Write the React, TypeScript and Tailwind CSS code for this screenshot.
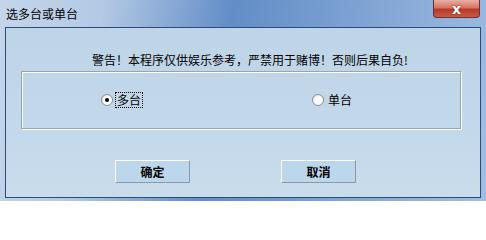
import React from "react";

const font = { fontFamily: '"SimSun","Noto Sans CJK SC","Liberation Sans",sans-serif' };

function Radio({ checked, label, focused }: { checked?: boolean; label: string; focused?: boolean }) {
  return (
    <div className="flex items-center">
      <div className="w-[12px] h-[12px] rounded-full border border-[#8a8f96] bg-[radial-gradient(circle_at_60%_60%,#ffffff_40%,#d6d9de_100%)] flex items-center justify-center">
        {checked && <div className="w-[4px] h-[4px] rounded-full bg-black" />}
      </div>
      <span
        className={
          "ml-[3px] text-[12px] leading-[14px] text-black px-[1px] " +
          (focused ? "outline outline-1 outline-dotted outline-black" : "")
        }
      >
        {label}
      </span>
    </div>
  );
}

function Btn({ label }: { label: string }) {
  return (
    <div className="w-[75px] h-[23px] flex items-center justify-center border border-t-white border-l-white border-r-[#8a98a8] border-b-[#8a98a8] bg-[#bcd6ec] text-[12px] font-bold text-black">
      {label}
    </div>
  );
}

export default function App() {
  return (
    <div
      style={font}
      className="w-[486px] h-[201px] overflow-hidden flex flex-col bg-[linear-gradient(100deg,#c5d6ea_0%,#b3c9e4_20%,#628dc6_45%,#7fa3d3_70%,#a2bee2_100%)]"
    >
      <div className="h-[27px] flex items-start justify-between pl-[6px] pr-[6px]">
        <span className="mt-[7px] text-[12px] leading-[13px] text-black">选多台或单台</span>
        <div className="w-[47px] h-[18px] rounded-b-[4px] border border-t-0 border-[#6e3030] bg-[linear-gradient(180deg,#e8b0a4_0%,#d87462_45%,#b73a28_55%,#c85a46_100%)] flex items-center justify-center">
          <span className="text-white font-bold text-[14px] leading-[14px]" style={{ fontFamily: '"DejaVu Sans",sans-serif', textShadow: "0 0 2px #5a1a10" }}>
            x
          </span>
        </div>
      </div>
      <div className="mx-[5px] w-[476px] h-[171px] border border-[#2d4a78] bg-[linear-gradient(180deg,#bed4e7_0%,#c3d8ea_60%,#c9dcec_100%)] flex flex-col">
        <div className="pl-[86px] mt-[25px] text-[12px] leading-[14px] text-black">
          警告！本程序仅供娱乐参考，严禁用于赌博！否则后果自负!
        </div>
        <div className="ml-[15px] mt-[4px] w-[440px] h-[58px] border border-[#98a4b0] shadow-[inset_1px_1px_0_#ffffff,1px_1px_0_#ffffff] flex items-center">
          <div className="ml-[79px]">
            <Radio checked label="多台" focused />
          </div>
          <div className="ml-[170px]">
            <Radio label="单台" />
          </div>
        </div>
        <div className="mt-[31px] flex">
          <div className="ml-[109px]">
            <Btn label="确定" />
          </div>
          <div className="ml-[91px]">
            <Btn label="取消" />
          </div>
        </div>
      </div>
    </div>
  );
}
